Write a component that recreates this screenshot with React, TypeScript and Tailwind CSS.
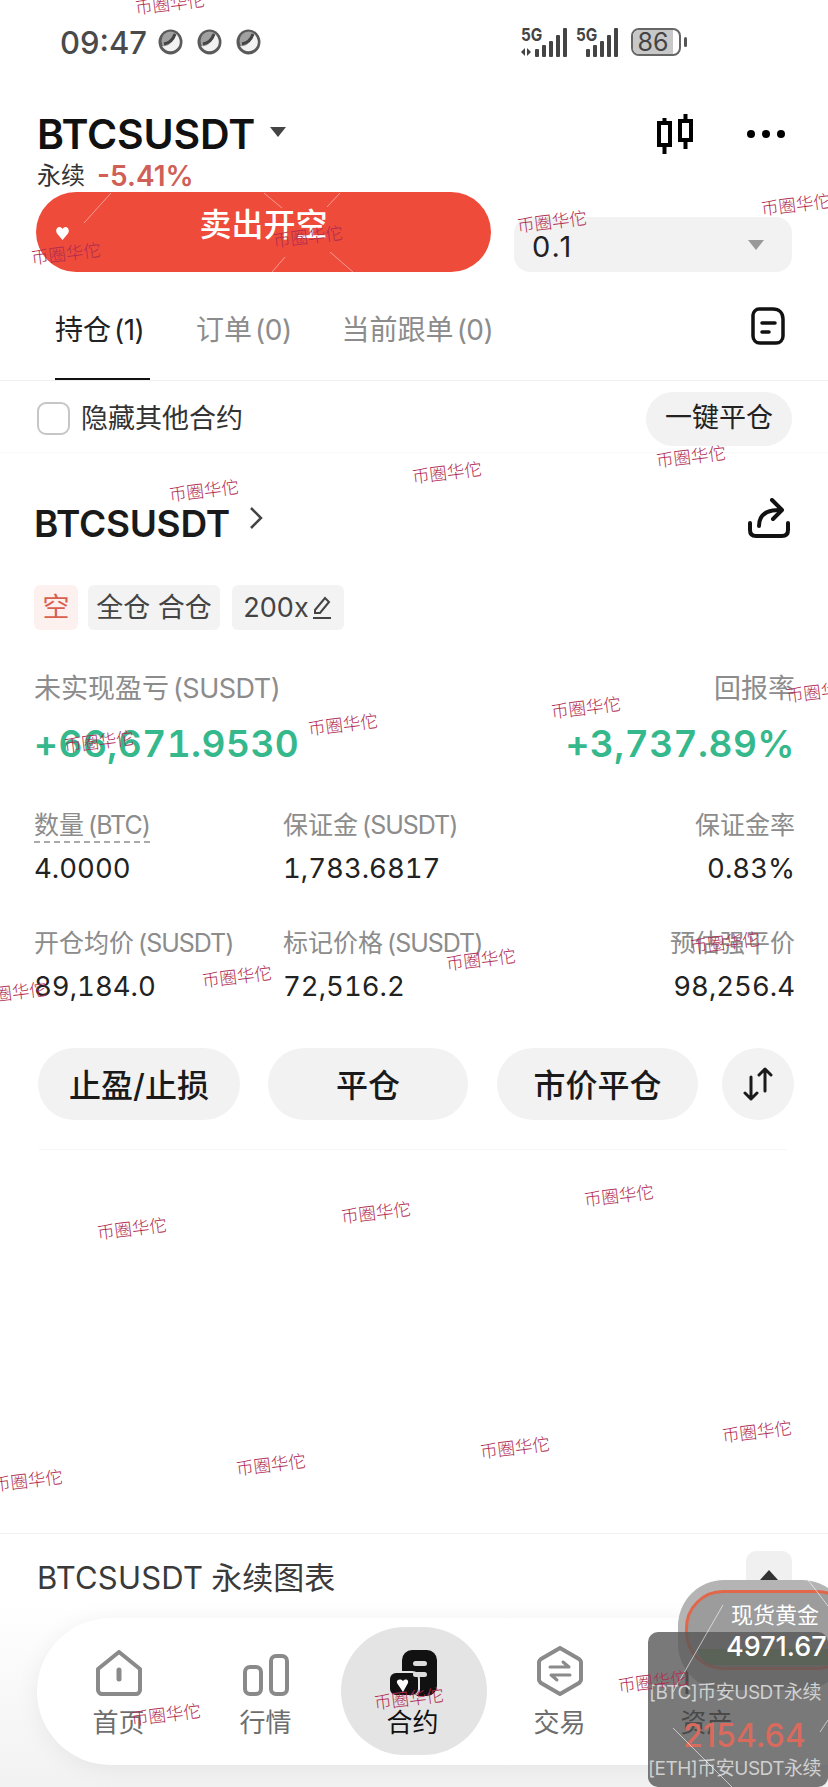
import React from 'react';

const FONT = "[font-family:Inter,'Noto_Sans_CJK_SC',sans-serif]";

const marks: [number, number][] = [
  [171, 4], [553, 222], [797, 205], [309, 237], [67, 254], [205, 491], [448, 473], [692, 457],
  [344, 725], [587, 708], [100, 742], [822, 692], [238, 977], [482, 960], [726, 943], [13, 993],
  [133, 1229], [377, 1213], [620, 1196], [272, 1465], [516, 1448], [758, 1432], [29, 1481],
  [167, 1715], [410, 1699], [654, 1682],
];

const Watermarks = () => (
  <>
    {marks.map(([x, y]) => (
      <span
        key={`${x}-${y}`}
        className="absolute z-40 w-[72px] -translate-x-1/2 -translate-y-1/2 -rotate-[7deg] whitespace-nowrap text-[17.500px] font-light leading-[20px] text-[#b02c50]"
        style={{ left: x, top: y }}
      >
        币圈华佗
      </span>
    ))}
  </>
);

const Sphere = () => (
  <svg width="25" height="26" viewBox="0 0 25 26">
    <ellipse cx="12.500" cy="13" rx="12" ry="12.500" fill="#5a5a5a" />
    <ellipse cx="12.500" cy="12" rx="9" ry="9.500" fill="#a0a0a0" />
    <path d="M4 17c6 1 11-3 14-12 3 3 5 7 3 12-4 7-13 7-17 0z" fill="#f2f2f2" />
    <path d="M6 15c5-1 9-4 11-10" stroke="#444" strokeWidth="3" fill="none" />
  </svg>
);

const Signal = ({ arrows, offset, width }: { arrows?: boolean; offset: number; width: number }) => (
  <div className="relative h-[29px]" style={{ width }}>
    <span className="absolute left-0 top-[-2px] origin-top-left scale-x-[0.85] text-[18px] font-bold leading-[18px] text-[#444]">5G</span>
    <svg className="absolute left-0 top-0" width={width} height="29" viewBox={`0 0 ${width} 29`}>
      {arrows && <path d="M0 24l4-4v8zM10 24l-4-4v8z" fill="#444" />}
      <rect x={offset} y="21" width="4" height="8" rx="1" fill="#444" />
      <rect x={offset + 7} y="17" width="4" height="12" rx="1" fill="#444" />
      <rect x={offset + 14} y="13" width="4" height="16" rx="1" fill="#444" />
      <rect x={offset + 21} y="7" width="4" height="22" rx="1" fill="#444" />
      <rect x={offset + 28} y="0" width="4" height="29" rx="1" fill="#444" />
    </svg>
  </div>
);

const Battery = () => (
  <div className="ml-[4px] flex items-center gap-[3px]">
    <div className="relative flex h-[28px] w-[50px] items-center overflow-hidden rounded-[8px] border-2 border-[#666]">
      <div className="absolute inset-y-0 left-0 w-[40px] bg-[#c8c8c8]" />
      <span className="relative w-[40px] text-center text-[25px] leading-none text-[#444]">86</span>
    </div>
    <div className="h-[10px] w-[3px] rounded-sm bg-[#555]" />
  </div>
);

const StatusBar = () => (
  <div className="flex h-[84px] items-center pl-[60px] pr-[141px]">
    <span className="w-[98px] text-[31px] font-medium leading-none text-[#4a4a4a]">09:47</span>
    <div className="flex gap-[14px]">
      <Sphere />
      <Sphere />
      <Sphere />
    </div>
    <div className="ml-auto flex items-center gap-[8px]">
      <Signal arrows offset={14} width={47} />
      <Signal offset={10} width={43} />
      <Battery />
    </div>
  </div>
);

const CandleIcon = () => (
  <svg width="36" height="40" viewBox="0 0 36 40" fill="none" stroke="#000" strokeWidth="4">
    <rect x="2" y="9" width="11" height="22" />
    <path d="M7.500 4v5M7.500 31v9" />
    <rect x="23" y="7" width="11" height="19" />
    <path d="M28.500 0v7M28.500 26v9" />
  </svg>
);

const Header = () => (
  <div className="pl-[37px] pr-[38px] pt-[28px]">
    <div className="flex h-[44px] items-center">
      <span className="text-[41px] font-semibold leading-[44px] tracking-[-0.2px] text-[#111]">BTCSUSDT</span>
      <div className="ml-[15px] mt-[-4px] h-0 w-0 border-x-[8px] border-t-[10px] border-x-transparent border-t-[#444]" />
      <div className="ml-auto mr-[54px]">
        <CandleIcon />
      </div>
      <div className="flex gap-[7px] pr-[5px]">
        <div className="h-[8px] w-[8px] rounded-full bg-black" />
        <div className="h-[8px] w-[8px] rounded-full bg-black" />
        <div className="h-[8px] w-[8px] rounded-full bg-black" />
      </div>
    </div>
    <div className="flex h-[36px] items-center pt-[4px]">
      <span className="text-[24px] leading-none text-[#333]">永续</span>
      <span className="ml-[12px] text-[28px] font-semibold leading-none text-[#cf5f57]">-5.41%</span>
    </div>
  </div>
);

const OrderRow = () => (
  <div className="flex items-end pl-[36px]">
    <button className="relative h-[80px] w-[455px] overflow-hidden rounded-full bg-[#ee4b3b]">
      <span className="relative top-[-7px] text-[32px] font-medium text-[#fff]">卖出开空</span>
      <svg className="absolute left-0 top-0" width="455" height="80" viewBox="0 0 455 80" fill="none" stroke="#fff" strokeOpacity="0.45" strokeWidth="1">
        <path d="M75 1L48 31M228 1l18 15M304 1l-13 14M249 65l-13 15M294 60l23 20" />
      </svg>
      <svg className="absolute left-[20px] top-[35px]" width="13" height="13" viewBox="0 0 13 13">
        <path d="M6.500 13L1 6.500C-1 3 1 0 3.500 0c1.500 0 2.500 1 3 2 .5-1 1.500-2 3-2C12 0 14 3 12 6.500z" fill="#fff" />
      </svg>
    </button>
    <div className="ml-[23px] flex h-[55px] w-[278px] items-center justify-between rounded-[16px] bg-[#f2f2f2] pl-[18px] pr-[28px]">
      <span className="mt-[3px] text-[29px] leading-none tracking-[2px] text-[#222]">0.1</span>
      <div className="h-0 w-0 border-x-[8px] border-t-[10px] border-x-transparent border-t-[#999]" />
    </div>
  </div>
);

const DocIcon = () => (
  <svg width="34" height="38" viewBox="0 0 34 38" fill="none" stroke="#111" strokeWidth="3.500" strokeLinecap="round">
    <path d="M8 2h14c6 0 10 4 10 10v17c0 4-3 7-7 7H9c-4 0-7-3-7-7V8c0-3 3-6 6-6z" />
    <path d="M11 16h13M11 25h7" />
  </svg>
);

const Count = ({ children }: { children: React.ReactNode }) => <span className="ml-[3px] tracking-[-0.5px]">{children}</span>;

const Tabs = () => (
  <div className="flex h-[109px] items-end border-b border-[#f0f0f0] pl-[55px] pr-[43px]">
    <div className="h-[70px] w-[95px] whitespace-nowrap border-b-2 border-[#111] pt-[2px] text-[28px] leading-[36px] text-[#222]">
      持仓<Count>(1)</Count>
    </div>
    <div className="ml-[46px] h-[70px] whitespace-nowrap pt-[2px] text-[28px] leading-[36px] text-[#8c8c8c]">
      订单<Count>(0)</Count>
    </div>
    <div className="ml-[50px] h-[70px] whitespace-nowrap pt-[2px] text-[28px] leading-[36px] text-[#8c8c8c]">
      当前跟单<Count>(0)</Count>
    </div>
    <div className="ml-auto h-[73px]">
      <DocIcon />
    </div>
  </div>
);

const HideRow = () => (
  <div className="flex h-[72px] items-center border-b border-[#fafafa] pl-[37px] pr-[36px] pt-[4px]">
    <div className="h-[33px] w-[33px] rounded-[9px] border-2 border-[#c6c6c6]" />
    <span className="ml-[11px] text-[27px] leading-none text-[#333]">隐藏其他合约</span>
    <button className="ml-auto h-[54px] w-[146px] rounded-full bg-[#f2f2f2] text-[27px] text-[#222]">一键平仓</button>
  </div>
);

const ShareIcon = () => (
  <svg width="42" height="40" viewBox="0 0 42 40" fill="none" stroke="#111" strokeWidth="4" strokeLinecap="round" strokeLinejoin="round">
    <path d="M2 25v7c0 4 2 6 6 6h26c4 0 6-2 6-6v-7" />
    <path d="M11 28c0-10 6-16 20-16" />
    <path d="M24 2l10 10-9 9" />
  </svg>
);

const Tag = ({ children, className }: { children: React.ReactNode; className: string }) => (
  <div className={`flex h-[45px] items-center rounded-[6px] text-[27px] leading-none ${className}`}>{children}</div>
);

const Stat = ({ label, unit, value, right, dashed }: { label: string; unit?: string; value: string; right?: boolean; dashed?: boolean }) => (
  <div className={right ? 'text-right' : ''}>
    <div className="h-[30px] whitespace-nowrap text-[25px] leading-[30px] text-[#8c8c8c]">
      <span className={dashed ? 'border-b-2 border-dashed border-[#aaa] pb-[1px]' : ''}>
        {label}
        {unit && <span className="ml-[4px] tracking-[-1px]">{unit}</span>}
      </span>
    </div>
    <div className="mt-[10px] h-[36px] text-[27.500px] tabular-nums leading-[36px] text-[#222]">{value}</div>
  </div>
);

const ActionButton = ({ label, className }: { label: string; className: string }) => (
  <button className={`h-[72px] rounded-full bg-[#f2f2f2] pt-[4px] text-[32px] font-medium text-[#1a1a1a] ${className}`}>{label}</button>
);

const Position = () => (
  <div className="pl-[34px] pr-[33px]">
    <div className="mt-[40px] flex h-[60px] items-center">
      <span className="text-[37px] font-semibold leading-none tracking-[-0.3px] text-[#1a1a1a]">BTCSUSDT</span>
      <svg className="ml-[18px] mt-[-10px]" width="16" height="24" viewBox="0 0 16 24" fill="none" stroke="#444" strokeWidth="2.500">
        <path d="M3 2l10 10L3 22" />
      </svg>
      <div className="ml-auto mr-[5px] mt-[-10px]">
        <ShareIcon />
      </div>
    </div>

    <div className="mt-[32px] flex">
      <Tag className="w-[44px] justify-center bg-[#fdf1ef] text-[#d9604f]">空</Tag>
      <Tag className="ml-[10px] w-[132px] justify-center bg-[#f3f3f3] text-[#444]">全仓 合仓</Tag>
      <Tag className="ml-[12px] w-[112px] justify-center gap-[2px] bg-[#f3f3f3] text-[#444]">
        200x
        <svg width="22" height="26" viewBox="0 0 22 26" fill="none" stroke="#444" strokeWidth="2">
          <path d="M4 15L14 3l4 4-9 11H4zM2 23h18" />
        </svg>
      </Tag>
    </div>

    <div className="mt-[44px] flex h-[30px] justify-between text-[27px] leading-[30px] text-[#8c8c8c]">
      <span>
        未实现盈亏<span className="ml-[4px] tracking-[-0.5px]">(SUSDT)</span>
      </span>
      <span>回报率</span>
    </div>
    <div className="mt-[18px] flex h-[44px] justify-between text-[37px] font-semibold tabular-nums leading-[44px] tracking-[0.5px] text-[#35b88c]">
      <span>+66,671.9530</span>
      <span>+3,737.89%</span>
    </div>

    <div className="mt-[44px] grid grid-cols-[249px_1fr_1fr]">
      <Stat label="数量" unit="(BTC)" value="4.0000" dashed />
      <Stat label="保证金" unit="(SUSDT)" value="1,783.6817" />
      <Stat label="保证金率" value="0.83%" right />
    </div>
    <div className="mt-[42px] grid grid-cols-[249px_1fr_1fr]">
      <Stat label="开仓均价" unit="(SUSDT)" value="89,184.0" />
      <Stat label="标记价格" unit="(SUSDT)" value="72,516.2" />
      <Stat label="预估强平价" value="98,256.4" right />
    </div>

    <div className="ml-[4px] mt-[44px] flex">
      <ActionButton label="止盈/止损" className="w-[202px]" />
      <ActionButton label="平仓" className="ml-[28px] w-[200px]" />
      <ActionButton label="市价平仓" className="ml-[29px] w-[201px]" />
      <button className="ml-[24px] flex h-[72px] w-[72px] items-center justify-center rounded-full bg-[#f2f2f2]">
        <svg width="32" height="34" viewBox="0 0 32 34" fill="none" stroke="#1a1a1a" strokeWidth="3" strokeLinecap="round" strokeLinejoin="round">
          <path d="M9 10v22M3 26l6 6 6-6" />
          <path d="M23 24V2M17 8l6-6 6 6" />
        </svg>
      </button>
    </div>
    <div className="ml-[5px] mr-[8px] mt-[29px] border-t border-[#f6f6f6]" />
  </div>
);

const ChartTitle = () => (
  <div className="mb-[166px] mt-auto flex h-[88px] items-start border-t border-[#f2f2f2] pl-[37px] pr-[36px]">
    <span className="mt-[24px] text-[31px] leading-[40px] text-[#3a3a3a]">
      <span className="mr-[8px] tracking-[0.2px]">BTCSUSDT</span>永续图表
    </span>
    <div className="ml-auto mt-[17px] flex h-[60px] w-[46px] justify-center rounded-[10px] bg-[#f0f0f0] pt-[19px]">
      <div className="h-0 w-0 border-x-[9px] border-b-[10px] border-x-transparent border-b-[#333]" />
    </div>
  </div>
);

const HomeIcon = () => (
  <svg width="46" height="46" viewBox="0 0 46 46" fill="none" stroke="#8a8a8a" strokeWidth="4" strokeLinejoin="round">
    <path d="M23 2L44 19v21c0 2-2 4-4 4H6c-2 0-4-2-4-4V19z" />
    <path d="M23 20v9" strokeLinecap="round" strokeWidth="5" />
  </svg>
);

const BarsIcon = () => (
  <svg width="46" height="42" viewBox="0 0 46 42" fill="none" stroke="#8a8a8a" strokeWidth="4">
    <rect x="2" y="13" width="16" height="27" rx="5" />
    <rect x="28" y="2" width="16" height="38" rx="5" />
  </svg>
);

const ContractIcon = () => (
  <svg width="48" height="46" viewBox="0 0 48 46">
    <rect x="13" y="0" width="35" height="46" rx="10" fill="#111" />
    <rect x="0" y="22" width="30" height="24" rx="7" fill="#111" stroke="#e4e4e4" strokeWidth="2" />
    <rect x="24" y="11" width="14" height="5" rx="2.500" fill="#ddd" />
    <rect x="24" y="22" width="14" height="5" rx="2.500" fill="#ddd" />
    <path d="M14 42l-6-9c-1-3 3-5 6-2 3-3 6-1 5 2z" fill="#fff" />
  </svg>
);

const TradeIcon = () => (
  <svg width="46" height="50" viewBox="0 0 46 50" fill="none" stroke="#8a8a8a" strokeWidth="4" strokeLinejoin="round">
    <path d="M23 2l19 11c1 1 2 2 2 3v18c0 1-1 2-2 3L23 48 4 37c-1-1-2-2-2-3V16c0-1 1-2 2-3z" />
    <path d="M13 21h19l-6-5M33 29H14l6 5" strokeWidth="3" strokeLinecap="round" />
  </svg>
);

const NavItem = ({ icon, label, active }: { icon: React.ReactNode; label: string; active?: boolean }) => (
  <div className="flex w-[147px] flex-col items-center">
    <div className="flex h-[52px] items-end">{icon}</div>
    <span className={`mt-[10px] text-[26px] leading-[34px] ${active ? 'text-[#111]' : 'text-[#6e6e6e]'}`}>{label}</span>
  </div>
);

const BottomNav = () => (
  <div className="absolute inset-x-0 bottom-0 h-[187px] bg-gradient-to-b from-[#ffffff00] to-[#f2f2f2]">
    <div className="absolute left-[37px] top-[18px] flex h-[147px] w-[860px] items-start rounded-full bg-white pl-[8px] pt-[26px] shadow-[0_4px_24px_#00000010]">
      <div className="absolute left-[304px] top-[9px] h-[128px] w-[146px] rounded-full bg-[#e4e4e4]" />
      <div className="relative flex">
        <NavItem icon={<HomeIcon />} label="首页" />
        <NavItem icon={<BarsIcon />} label="行情" />
        <NavItem icon={<ContractIcon />} label="合约" active />
        <NavItem icon={<TradeIcon />} label="交易" />
        <NavItem
          icon={
            <svg width="44" height="30" viewBox="0 0 44 30" fill="none" stroke="#222" strokeWidth="3">
              <path d="M2 28V2h40v26" />
              <circle cx="24" cy="16" r="2" fill="#222" />
            </svg>
          }
          label="资产"
          active
        />
      </div>
    </div>
  </div>
);

const Floating = () => (
  <>
    <div className="absolute left-[678px] top-[1580px] z-20 h-[110px] w-[170px] rounded-[46px] bg-[#b4b4b4]">
      <div className="absolute left-[7px] top-[10px] h-[80px] w-[170px] rounded-[38px] border-[3px] border-[#e2674a] bg-[#9c9c9c]">
        <div className="absolute inset-x-[10px] bottom-[2px] h-[16px] rounded-b-[30px] bg-[#6c8a58]" />
      </div>
    </div>
    <div className="absolute bottom-0 left-[648px] z-20 h-[155px] w-[180px] rounded-[10px] bg-[#585858cc]" />
    <div className="absolute left-[648px] top-[1632px] z-30 h-[155px] w-[180px]">
      <div className="whitespace-nowrap pr-[7px] pt-[49px] text-right text-[19px] leading-[24px] tracking-[-0.5px] text-[#d0d0d0]">[BTC]币安USDT永续</div>
      <div className="mt-[11px] pl-[35px] text-[32px] font-medium leading-[40px] text-[#d96a5e]">2154.64</div>
      <div className="whitespace-nowrap pr-[7px] pt-[1px] text-right text-[19px] leading-[24px] tracking-[-0.5px] text-[#d0d0d0]">[ETH]币安USDT永续</div>
    </div>
    <div className="absolute left-[726px] top-[1601px] z-30 w-[98px] text-center text-white">
      <div className="text-[22px] leading-[28px]">现货黄金</div>
      <div className="mt-[2px] text-[27px] font-medium leading-[32px]">4971.67</div>
    </div>
    <svg className="absolute bottom-0 left-[648px] z-30" width="180" height="207" viewBox="0 0 180 207" fill="none" stroke="#fff" strokeOpacity="0.6">
      <path d="M75 25L25 112M160 0l20 26M25 148l90 90M180 140l-8 12" />
    </svg>
  </>
);

export default function App() {
  return (
    <div className={`relative flex h-[1787px] w-[828px] flex-col overflow-hidden bg-white ${FONT}`}>
      <StatusBar />
      <Header />
      <OrderRow />
      <Tabs />
      <HideRow />
      <Position />
      <ChartTitle />
      <BottomNav />
      <Floating />
      <Watermarks />
    </div>
  );
}
